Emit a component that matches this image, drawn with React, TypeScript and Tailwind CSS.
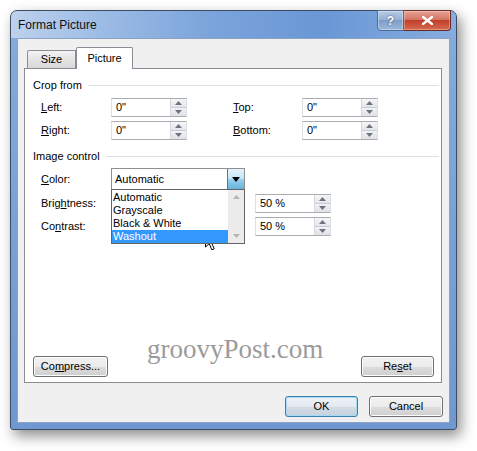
import React from 'react';

const font = "font-['Liberation_Sans',Arial,sans-serif]";

const SpinArrows: React.FC = () => (
  <div className="flex w-[16px] flex-col border-l border-[#d5d7dc]">
    <div className="flex flex-1 items-center justify-center border-b border-[#c9ccd2] bg-[linear-gradient(#f6f6f6,#e4e6ea)]">
      <svg width="7" height="4" viewBox="0 0 7 4">
        <path d="M0 4 L3.5 0 L7 4 Z" fill="#6d7480" />
      </svg>
    </div>
    <div className="flex flex-1 items-center justify-center bg-[linear-gradient(#f1f2f4,#dfe2e6)]">
      <svg width="7" height="4" viewBox="0 0 7 4">
        <path d="M0 0 L3.5 4 L7 0 Z" fill="#6d7480" />
      </svg>
    </div>
  </div>
);

const Spin: React.FC<{ value: string }> = ({ value }) => (
  <div className="flex h-[19px] w-[76px] border border-[#abadb3] border-l-[#dbdfe6] border-r-[#dbdfe6] bg-white">
    <span className="flex-1 pl-[4px] leading-[17px]">{value}</span>
    <SpinArrows />
  </div>
);

const Btn: React.FC<{ w: string; children: React.ReactNode; primary?: boolean }> = ({ w, children, primary }) => (
  <button
    className={
      primary
        ? `${w} h-[21px] rounded-[3px] border border-[#3c7fb1] bg-[linear-gradient(#eef3f7,#e3e9ef_50%,#d3dce5_50%,#c7d2dc)] shadow-[inset_0_0_0_1px_#a6d9f4] text-[11px] text-black`
        : `${w} h-[21px] rounded-[3px] border border-[#707070] bg-[linear-gradient(#f2f2f2,#ebebeb_50%,#dddddd_50%,#cfcfcf)] shadow-[inset_0_0_0_1px_#fcfcfc] text-[11px] text-black`
    }
  >
    {children}
  </button>
);

const Section: React.FC<{ title: string }> = ({ title }) => (
  <div className="flex h-[15px] items-center gap-[6px] pl-[8px] pr-[2px]">
    <span>{title}</span>
    <div className="h-px flex-1 bg-[#dcdfe4]" />
  </div>
);

const Cursor: React.FC = () => (
  <svg className="absolute left-[205px] top-[231px]" width="13" height="20" viewBox="0 0 13 20">
    <path
      d="M0.5 0.5 L0.5 16 L4.2 12.6 L6.8 18.8 L9.2 17.8 L6.6 11.8 L11.6 11.8 Z"
      fill="#fff"
      stroke="#000"
      strokeWidth="1"
      strokeLinejoin="round"
    />
  </svg>
);

const App: React.FC = () => {
  return (
    <div className={`relative h-[451px] w-[477px] overflow-hidden bg-white ${font} text-[11px] text-black`}>
      <div className="ml-[10px] mt-[10px] flex h-[420px] w-[447px] flex-col rounded-t-[7px] rounded-b-[3px] border border-[#3b4c63] bg-[linear-gradient(to_bottom,#86abdc,#6f98d1)] shadow-[4px_6px_14px_rgba(0,0,0,0.45)]">
        {/* title bar */}
        <div className="relative flex h-[27px] items-center rounded-t-[6px] bg-[linear-gradient(to_right,#bcd1ec,#a0bee6_18%,#7ba4db_45%,#6a97d5_70%,#86ade0)] pl-[7px]">
          <span className="text-[12px] text-[#111]">Format Picture</span>
          <div className="absolute right-[5px] top-[-1px] flex h-[21px]">
            <div className="flex w-[27px] items-center justify-center rounded-bl-[4px] border border-[#4d6a93] bg-[linear-gradient(#b9cbe3,#93afd3_50%,#7e9ec8_50%,#9cb8dc)] shadow-[inset_0_0_0_1px_rgba(255,255,255,0.35)]">
              <span className="text-[12px] font-bold text-white [text-shadow:0_0_2px_#2b4060]">?</span>
            </div>
            <div className="flex w-[47px] items-center justify-center rounded-br-[4px] border border-l-0 border-[#6b2a22] bg-[linear-gradient(#e7a294,#d4705f_50%,#c1402c_50%,#d66a4f)] shadow-[inset_0_0_0_1px_rgba(255,255,255,0.3)]">
              <svg width="11" height="9" viewBox="0 0 11 9">
                <path d="M1 1 L10 8 M10 1 L1 8" stroke="#fff" strokeWidth="2.4" strokeLinecap="square" />
              </svg>
            </div>
          </div>
        </div>

        {/* client */}
        <div className="mx-[6px] mb-[6px] flex flex-1 flex-col border border-[#8da3c1] bg-[#f0f0f0] px-[6px] pt-[8px]">
          {/* tabs */}
          <div className="flex h-[21px] items-end pl-[3px]">
            <div className="flex h-[18px] w-[49px] items-center justify-center rounded-tl-[2px] border border-b-0 border-[#898c95] bg-[linear-gradient(#f3f3f3,#e3e3e3_50%,#d9d9d9)]">
              Size
            </div>
            <div className="relative z-10 -mb-px flex h-[22px] w-[57px] items-center justify-center rounded-t-[2px] border border-b-0 border-[#898c95] bg-white pb-[1px]">
              Picture
            </div>
          </div>

          {/* panel */}
          <div className="relative mr-[1px] flex h-[315px] flex-col border border-[#898c95] bg-white pt-[9px]">
            <Section title="Crop from" />
            <div className="mt-[5px] flex flex-col gap-[4px]">
              <div className="flex items-center">
                <span className="w-[86px] pl-[16px]">
                  <span className="underline">L</span>eft:
                </span>
                <Spin value={'0"'} />
                <span className="w-[115px] pl-[46px]">
                  <span className="underline">T</span>op:
                </span>
                <Spin value={'0"'} />
              </div>
              <div className="flex items-center">
                <span className="w-[86px] pl-[16px]">
                  <span className="underline">R</span>ight:
                </span>
                <Spin value={'0"'} />
                <span className="w-[115px] pl-[46px]">
                  <span className="underline">B</span>ottom:
                </span>
                <Spin value={'0"'} />
              </div>
            </div>

            <div className="mt-[9px]">
              <Section title="Image control" />
            </div>

            <div className="mt-[4px] flex items-center">
              <span className="w-[86px] pl-[16px]">
                <span className="underline">C</span>olor:
              </span>
              <div className="relative z-20 flex h-[22px] w-[134px] border border-[#8e8f8f] bg-white">
                <span className="flex-1 pl-[3px] leading-[20px]">Automatic</span>
                <div className="flex w-[17px] items-center justify-center border-l border-[#3c7fb1] bg-[linear-gradient(#e5f4fc,#c4e5f6_50%,#98d1ef_50%,#68b3db)]">
                  <svg width="8" height="5" viewBox="0 0 8 5">
                    <path d="M0 0 L8 0 L4 5 Z" fill="#000" />
                  </svg>
                </div>
                {/* open list */}
                <div className="absolute left-[-1px] top-full flex h-[55px] w-[134px] border border-[#646464] bg-white">
                  <div className="flex flex-1 flex-col pt-[1px]">
                    <div className="h-[13px] pl-[1px] leading-[13px]">Automatic</div>
                    <div className="h-[13px] pl-[1px] leading-[13px]">Grayscale</div>
                    <div className="h-[13px] pl-[1px] leading-[13px]">Black &amp; White</div>
                    <div className="h-[13px] bg-[#3399ff] pl-[1px] leading-[13px] text-white">Washout</div>
                  </div>
                  <div className="flex w-[16px] flex-col items-center justify-between bg-[#ececec] py-[5px]">
                    <svg width="7" height="4" viewBox="0 0 7 4">
                      <path d="M0 4 L3.5 0 L7 4 Z" fill="#b4b4b4" />
                    </svg>
                    <svg width="7" height="4" viewBox="0 0 7 4">
                      <path d="M0 0 L3.5 4 L7 0 Z" fill="#b4b4b4" />
                    </svg>
                  </div>
                </div>
              </div>
            </div>

            <div className="mt-[4px] flex flex-col gap-[4px]">
              <div className="flex items-center">
                <span className="w-[230px] pl-[16px]">
                  Brig<span className="underline">h</span>tness:
                </span>
                <Spin value="50 %" />
              </div>
              <div className="flex items-center">
                <span className="w-[230px] pl-[16px]">
                  Co<span className="underline">n</span>trast:
                </span>
                <Spin value="50 %" />
              </div>
            </div>

            <div className="mt-auto flex items-end justify-between pb-[5px] pl-[8px] pr-[7px]">
              <Btn w="w-[75px]">
                Co<span className="underline">m</span>press...
              </Btn>
              <Btn w="w-[73px]">
                Re<span className="underline">s</span>et
              </Btn>
            </div>
          </div>

          {/* dialog buttons */}
          <div className="mt-[13px] flex justify-end gap-[11px]">
            <Btn w="w-[73px]" primary>
              OK
            </Btn>
            <Btn w="w-[74px]">Cancel</Btn>
          </div>
        </div>
      </div>

      {/* watermark */}
      <span className="pointer-events-none absolute left-[147px] top-[333px] font-['Liberation_Serif',serif] text-[27px] leading-[32px] text-[#9b9b9b]">
        groovyPost.com
      </span>

      <Cursor />
    </div>
  );
};

export default App;
